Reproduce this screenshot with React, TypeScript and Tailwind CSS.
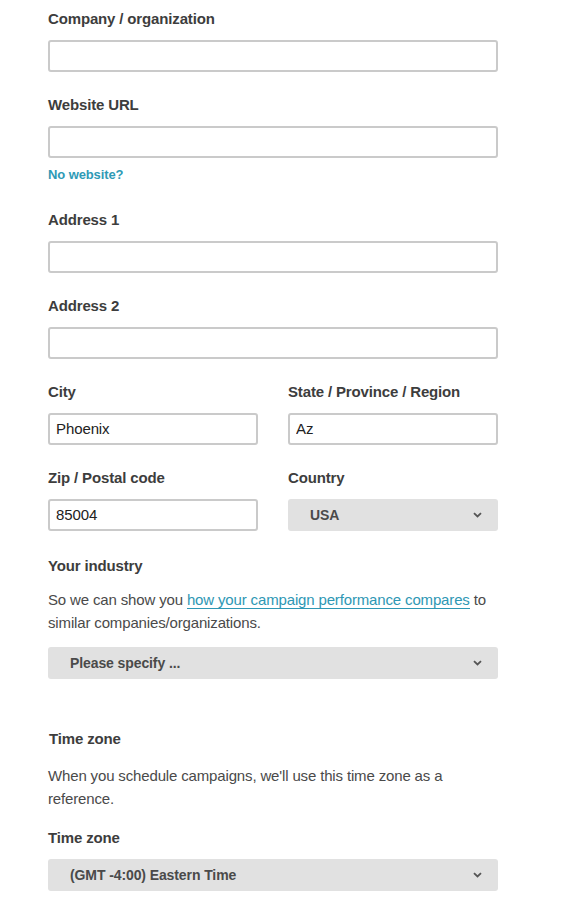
import React from "react";

const labelCls = "block text-[15px] leading-[20px] font-bold text-[#3d3d3d] pt-[1px] mb-[11px] tracking-[-0.15px]";
const inputCls =
  "block w-full h-[32px] border-2 border-[#cacaca] rounded-[3px] bg-white px-[6px] pb-[2px] text-[15px] text-[#222] outline-none tracking-[-0.1px]";

function Chevron() {
  return (
    <svg width="9" height="6" viewBox="0 0 9 6" className="shrink-0">
      <path d="M1 1.2 L4.5 4.5 L8 1.2" fill="none" stroke="#555" strokeWidth="1.8" />
    </svg>
  );
}

function Select({ value, pl }: { value: string; pl: string }) {
  return (
    <div className={`flex items-center justify-between h-[32px] w-full bg-[#e1e1e1] rounded-[3px] pr-[16px] ${pl}`}>
      <span className="text-[14px] font-bold text-[#4a4a4a] tracking-[-0.1px]">{value}</span>
      <Chevron />
    </div>
  );
}

function Field({ label, value, mb }: { label: string; value?: string; mb: string }) {
  return (
    <div className={mb}>
      <label className={labelCls}>{label}</label>
      <input className={inputCls} defaultValue={value ?? ""} />
    </div>
  );
}

export default function App() {
  return (
    <div className="min-h-[914px] bg-white" style={{ fontFamily: '"Liberation Sans", Arial, sans-serif' }}>
      <div className="w-[450px] ml-[48px] pt-[8px]">
        <Field label="Company / organization" mb="mb-[22px]" />
        <div className="mb-[9px]">
          <label className={labelCls}>Website URL</label>
          <input className={inputCls} />
        </div>
        <a className="block text-[13px] leading-[16px] font-bold text-[#2e9ab6] mb-[26px] tracking-[-0.1px]">No website?</a>
        <Field label="Address 1" mb="mb-[22px]" />
        <Field label="Address 2" mb="mb-[22px]" />
        <div className="grid grid-cols-2 gap-x-[30px] mb-[22px]">
          <div>
            <label className={labelCls}>City</label>
            <input className={inputCls} defaultValue="Phoenix" />
          </div>
          <div>
            <label className={labelCls}>State / Province / Region</label>
            <input className={inputCls} defaultValue="Az" />
          </div>
        </div>
        <div className="grid grid-cols-2 gap-x-[30px] mb-[24px]">
          <div>
            <label className={labelCls}>Zip / Postal code</label>
            <input className={inputCls} defaultValue="85004" />
          </div>
          <div>
            <label className={labelCls}>Country</label>
            <Select value="USA" pl="pl-[22px]" />
          </div>
        </div>
        <label className={labelCls}>Your industry</label>
        <p className="pt-[1px] text-[15px] leading-[23px] text-[#4a4a4a] mb-[13px] tracking-[-0.15px]">
          So we can show you{" "}
          <a className="text-[#2e97b4] border-b border-[#2e97b4]">how your campaign performance compares</a> to
          similar companies/organizations.
        </p>
        <Select value="Please specify ..." pl="pl-[22px]" />
        <h3 className="mt-[50px] ml-[1px] text-[15px] leading-[20px] font-bold text-[#3d3d3d] mb-[15px] tracking-[-0.15px]">Time zone</h3>
        <p className="text-[15px] leading-[23px] text-[#4a4a4a] mb-[17px] tracking-[-0.15px]">
          When you schedule campaigns, we'll use this time zone as a reference.
        </p>
        <label className={labelCls}>Time zone</label>
        <Select value="(GMT -4:00) Eastern Time" pl="pl-[22px]" />
      </div>
    </div>
  );
}
